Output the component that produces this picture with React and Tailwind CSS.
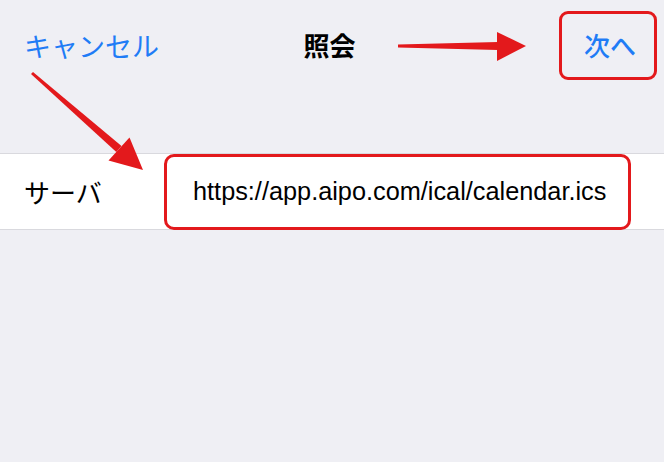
import React from 'react'

const jp = { fontFamily: '"Noto Sans CJK JP", "Noto Sans", sans-serif' }

function Arrows() {
  // red annotation arrows drawn over the screen
  return (
    <svg className="absolute inset-0 pointer-events-none" width="664" height="462" viewBox="0 0 664 462">
      <polygon points="398,44.5 398,47.5 498,50 498,42" fill="#e3191c" />
      <polygon points="497,32 526,46 497,61" fill="#e3191c" />
      <polygon points="31,74.1 33,71.9 121.5,145.9 116.3,151.9" fill="#e3191c" />
      <polygon points="108.5,160.5 143,170 129.5,137.5" fill="#e3191c" />
    </svg>
  )
}

export default function App() {
  return (
    <div className="relative w-[664px] h-[462px] overflow-hidden bg-[#efeff4]" style={jp}>
      <div className="grid grid-cols-[1fr_auto_1fr] items-center h-[90px] pl-6 pr-[7px]">
        <span className="text-[27px] leading-none text-[#1f7cf6] justify-self-start">キャンセル</span>
        <span className="text-[26px] leading-none font-bold text-black pr-[22px]">照会</span>
        <div className="justify-self-end flex items-center justify-center w-[98px] h-[69px] border-[3px] border-[#e3191c] rounded-[9px]">
          <span className="text-[26px] leading-none font-medium text-[#1f7cf6] pl-1">次へ</span>
        </div>
      </div>

      <div className="mt-[63px] h-[77px] flex items-center bg-white border-y border-[#d9d9de] pl-6">
        <span className="w-[140px] text-[26px] leading-none text-black">サーバ</span>
        <div className="w-[467px] h-[76px] flex items-center border-[3px] border-[#e3191c] rounded-[10px] pl-[26px]">
          <span className="text-[25.3px] leading-none text-black" style={{ fontFamily: '"Liberation Sans", Arial, sans-serif' }}>
            https://app.aipo.com/ical/calendar.ics
          </span>
        </div>
      </div>

      <Arrows />
    </div>
  )
}
